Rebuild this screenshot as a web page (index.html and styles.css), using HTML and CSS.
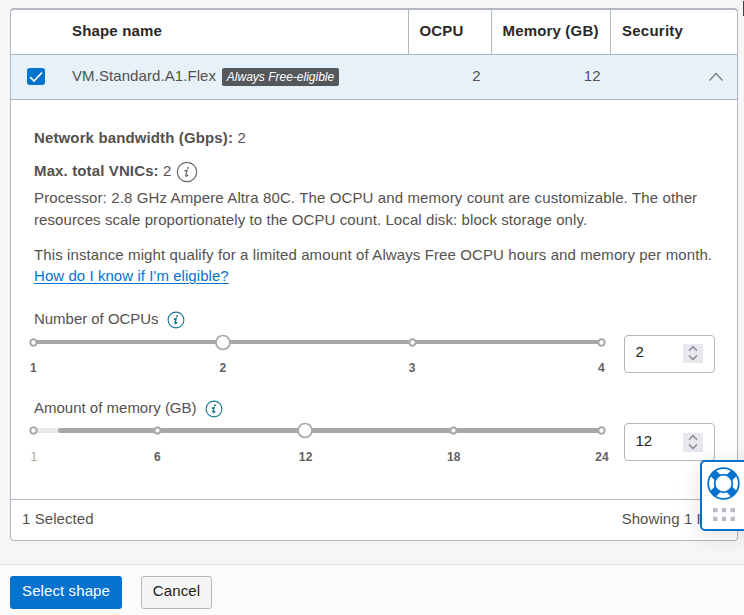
FILE: index.html
```html
<!DOCTYPE html>
<html lang="en">
<head>
<meta charset="utf-8">
<title>Browse all shapes</title>
<link rel="stylesheet" href="styles.css">
</head>
<body>
<div class="page">
  <main class="card">
    <div class="row head">
      <div class="cell name"><b>Shape name</b></div>
      <div class="cell ocpu"><b>OCPU</b></div>
      <div class="cell mem"><b>Memory (GB)</b></div>
      <div class="cell sec"><b>Security</b></div>
    </div>
    <div class="row selected">
      <div class="check"><svg width="18" height="17" viewBox="0 0 18 17"><path d="M3 9l4 4 8-8.5" fill="none" stroke="#fff" stroke-width="1.7"/></svg></div>
      <span class="shape">VM.Standard.A1.Flex</span>
      <span class="tag"><i>Always Free-eligible</i></span>
      <span class="num ocpu-num">2</span>
      <span class="num mem-num">12</span>
      <svg class="chevron" width="16" height="10" viewBox="0 0 16 10"><path d="M1.5 8.5l6.5-7 6.5 7" fill="none" stroke="#7b7977" stroke-width="1.2"/></svg>
    </div>
    <section class="details">
      <p class="bandwidth"><b>Network bandwidth (Gbps):</b> <span>2</span></p>
      <p class="vnics"><span><b>Max. total VNICs:</b> 2</span>
        <svg class="info" width="22" height="22" viewBox="0 0 22 22"><circle cx="11" cy="11" r="9.7" fill="none" stroke="#6b6866" stroke-width="1.2"/><circle cx="11.9" cy="6.9" r=".9" fill="#5c5855"/><path d="M8.4 10q1.3-.3 2.7-.6l-1.3 5q-.2 1 .6.8.9-.3 1.8-1.4" fill="none" stroke="#5c5855" stroke-width="1.1"/></svg>
      </p>
      <p class="processor"><span class="l1">Processor: 2.8 GHz Ampere Altra 80C. The OCPU and memory count are customizable. The other</span><br><span class="l2">resources scale proportionately to the OCPU count. Local disk: block storage only.</span></p>
      <p class="qualify"><span class="l3">This instance might qualify for a limited amount of Always Free OCPU hours and memory per month.</span><br><a class="link" href="#">How do I know if I'm eligible?</a></p>

      <div class="field-label first"><span class="t1">Number of OCPUs</span>
        <svg width="18" height="18" viewBox="0 0 18 18"><circle cx="9" cy="9" r="7.9" fill="none" stroke="#187594" stroke-width="1.1"/><circle cx="9.9" cy="5.3" r="1" fill="#187594"/><path d="M6.8 8.2q1.2-.3 2.3-.5l-1.1 4q-.2 1 .6.7.8-.3 1.5-1.2" fill="none" stroke="#187594" stroke-width="1.4"/></svg>
      </div>
      <div class="control">
        <div class="slider">
          <svg class="track" width="580" height="18" viewBox="0 0 580 18">
            <path d="M6 9h568" stroke="#a7a7a7" stroke-width="4"/>
            <g fill="#fff" stroke="#a7a7a7" stroke-width="2"><circle cx="5.5" cy="9.5" r="3.2"/><circle cx="384.5" cy="9.5" r="3.2"/><circle cx="573.5" cy="9.5" r="3.2"/><circle cx="195" cy="9.5" r="7" stroke-width="1.7"/></g>
          </svg>
          <div class="ticks even"><span><b>1</b></span><span><b>2</b></span><span><b>3</b></span><span><b>4</b></span></div>
        </div>
        <div class="stepper"><span>2</span><svg width="20" height="19" viewBox="0 0 20 19"><path fill="#e9e7ee" d="M0 0h20v19H0z"/><path d="M6 6.7l4-4 4 4M6 11.5l4 4 4-4" fill="none" stroke="#918e9b" stroke-width="1.6"/></svg></div>
      </div>

      <div class="field-label second"><span class="t2">Amount of memory (GB)</span>
        <svg width="18" height="18" viewBox="0 0 18 18"><circle cx="9" cy="9" r="7.9" fill="none" stroke="#187594" stroke-width="1.1"/><circle cx="9.9" cy="5.3" r="1" fill="#187594"/><path d="M6.8 8.2q1.2-.3 2.3-.5l-1.1 4q-.2 1 .6.7.8-.3 1.5-1.2" fill="none" stroke="#187594" stroke-width="1.4"/></svg>
      </div>
      <div class="control lower">
        <div class="slider">
          <svg class="track" width="580" height="18" viewBox="0 0 580 18">
            <path d="M6 9.5h30" stroke="#e9e9e9" stroke-width="5"/>
            <path d="M32.5 9.5H572" stroke="#a7a7a7" stroke-width="5" stroke-linecap="round"/>
            <g fill="#fff" stroke="#a7a7a7" stroke-width="2"><circle cx="5.5" cy="9.5" r="3.2"/><circle cx="129.5" cy="9.5" r="3"/><circle cx="425.5" cy="9.5" r="3"/><circle cx="573.5" cy="9.5" r="3.2"/><circle cx="277" cy="9.5" r="7" stroke-width="1.7"/></g>
          </svg>
          <div class="ticks memory"><span class="muted"><b>1</b></span><span><b>6</b></span><span><b>12</b></span><span><b>18</b></span><span><b>24</b></span></div>
        </div>
        <div class="stepper"><span>12</span><svg width="20" height="19" viewBox="0 0 20 19"><path fill="#e9e7ee" d="M0 0h20v19H0z"/><path d="M6 6.7l4-4 4 4M6 11.5l4 4 4-4" fill="none" stroke="#918e9b" stroke-width="1.6"/></svg></div>
      </div>
    </section>
    <div class="summary"><span>1 Selected</span><span class="showing">Showing 1 Item</span></div>
  </main>
  <footer class="actions"><button class="primary">Select shape</button><button class="cancel">Cancel</button></footer>
</div>
<aside class="help">
  <svg width="34" height="34" viewBox="0 0 34 34"><circle cx="16.5" cy="16.5" r="15.5" fill="#fff"/><path d="M6 6l21 21M27 6L6 27" stroke="#0572ce" stroke-width="8"/><circle cx="16.5" cy="16.5" r="15.3" fill="none" stroke="#0572ce" stroke-width="1.8"/><circle cx="16.5" cy="16.5" r="8.8" fill="#fff" stroke="#0572ce" stroke-width="1.8"/></svg>
  <svg width="22" height="13" viewBox="0 0 22 13"><path fill="#b6bcc5" d="M0 0h4.5v4.2H0zM8.8 0h4.4v4.2H8.8zM17.5 0H22v4.2h-4.5zM0 8.8h4.5V13H0zM8.8 8.8h4.4V13H8.8zM17.5 8.8H22V13h-4.5z"/></svg>
</aside>
<div class="edge"></div>
</body>
</html>
```
FILE: styles.css
```css
* { box-sizing: border-box; }
body { margin: 0; width: 744px; height: 615px; overflow: hidden; position: relative; background: #f6f6f6; color: #55514e; font: 15px/22px "Liberation Sans", Arial, sans-serif; }
p { margin: 0; white-space: nowrap; }
.page { display: flex; flex-direction: column; height: 615px; padding-top: 8px; }
.card { display: flex; flex-direction: column; width: 728px; height: 533px; margin-left: 10px; flex: none; background: #fff; border: 1px solid #b1b7c2; border-top-width: 2px; border-radius: 4px; overflow: hidden; }
.row { display: flex; flex: none; border-bottom: 1px solid #b1b7c2; height: 45px; }
.head { color: #2a2826; letter-spacing: .17px; }
.cell { padding: 10px 0 0 11px; border-left: 1px solid #b1b7c2; white-space: nowrap; }
.name { width: 397px; padding-left: 61px; border-left: 0; }
.ocpu { width: 83px; padding-left: 10.5px; }
.mem { width: 119px; padding-left: 10.5px; }
.sec { flex: 1; letter-spacing: .25px; }
.selected { background: #e6f1fa; padding-left: 16px; align-items: flex-start; }
.check { width: 18px; height: 17px; margin: 13px 27px 0 0; border-radius: 3px; background: #0572ce; }
.check svg { display: block; }
.shape { width: 150px; padding-top: 10px; letter-spacing: .08px; }
.tag { width: 117px; height: 18px; margin-top: 13px; border-radius: 2px; background: #55585a; color: #fff; font-size: 12px; line-height: 18px; text-align: center; white-space: nowrap; }
.num { padding-top: 10px; text-align: right; }
.ocpu-num { width: 141.5px; }
.mem-num { width: 120px; }
.chevron { margin: 17px 0 0 107px; }
.details { flex: 1; padding: 27px 0 0 23px; }
.bandwidth, .vnics { letter-spacing: .13px; }
.vnics { display: flex; align-items: center; gap: 4px; height: 22px; margin-top: 11px; }
.info { margin-top: 1px; }
.processor { margin-top: 5px; }
.l1 { letter-spacing: .122px; }
.l2 { letter-spacing: .09px; }
.l3 { letter-spacing: .108px; }
.qualify { margin-top: 13px; line-height: 21px; }
.link { color: #0572ce; letter-spacing: .06px; text-decoration: underline; text-underline-offset: 2px; }
.field-label { display: flex; align-items: center; gap: 8px; height: 22px; }
.field-label svg { margin-top: 1px; }
.first { margin-top: 22px; }
.t1 { letter-spacing: -.03px; }
.second { margin-top: 23px; }
.control { display: flex; height: 44px; }
.slider { width: 590px; flex: none; }
.track { display: block; margin: 3px 0 0 -6px; }
.ticks { display: flex; width: 568px; margin: 8px 0 0 -.5px; font-size: 12px; line-height: 18px; color: #62605e; }
.ticks span { width: 0; }
.ticks b { display: inline-block; letter-spacing: .2px; transform: translateX(-50%); }
.even { justify-content: space-between; }
.memory { margin: 9px 0 0; }
.memory span { flex: 6 0 0; }
.memory span:first-child { flex-grow: 5; }
.memory span:last-child { flex: 0 0 0; }
.ticks .muted b { color: #a7a7a7; font-weight: normal; }
.stepper { display: flex; justify-content: space-between; width: 91px; height: 38px; margin-top: 5px; padding: 5px 11px 0 10.5px; border: 1px solid #b1b7c2; border-radius: 4px; color: #201e1c; }
.stepper svg { margin-top: 3px; }
.lower .track { margin-top: 2px; }
.lower .stepper { margin-top: 4px; padding-top: 6px; }
.summary { display: flex; justify-content: space-between; flex: none; height: 41px; padding: 8px 11px 0; border-top: 1px solid #b1b7c2; letter-spacing: .07px; }
.actions { display: flex; gap: 19px; flex: 1; margin-top: 23px; padding: 11px 10px 0; border-top: 1px solid #e1e1e1; background: #fbfbfb; }
button { height: 33px; padding: 0 0 3px; border-radius: 3px; font: inherit; letter-spacing: .1px; white-space: nowrap; }
.primary { width: 112px; border: 0; background: #0572ce; color: #fff; }
.cancel { width: 71px; border: 1px solid #b1b7c2; background: #f5f5f5; color: #201e1c; }
.help { position: absolute; left: 700px; top: 460px; width: 50px; height: 71px; padding: 5px 0 0 5px; border: 2px solid #0572ce; border-radius: 5px; background: #fff; box-shadow: 0 4px 24px rgba(0,0,0,.12); }
.help svg { display: block; }
.help svg + svg { margin: 7px 0 0 6px; }
.edge { position: absolute; left: 743px; top: 1px; width: 1px; height: 15px; background: #403f40; }
```
